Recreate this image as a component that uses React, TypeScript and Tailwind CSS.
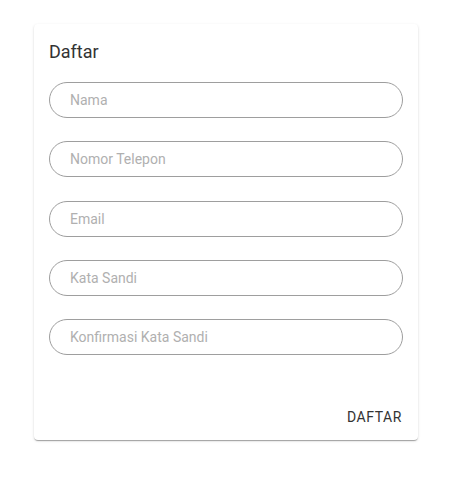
const fields = ['Nama', 'Nomor Telepon', 'Email', 'Kata Sandi', 'Konfirmasi Kata Sandi'];

export default function App() {
  return (
    <div className="min-h-[491px] w-[469px] bg-white pt-[24px] pl-[34px] font-['Roboto',sans-serif]">
      <div className="flex h-[416px] w-[384px] flex-col rounded-[4px] bg-white shadow-[0_2px_1px_-1px_rgba(0,0,0,0.2),0_1px_1px_0_rgba(0,0,0,0.14),0_1px_3px_0_rgba(0,0,0,0.12)]">
        {/* Form */}
        <div className="px-[15px] pt-[14px]">
          <h2 className="text-[18px] leading-[27px] text-[#333]">Daftar</h2>
          <div className="mt-[17px] flex flex-col gap-[23.3px]">
            {fields.map((f) => (
              <input
                key={f}
                type={f.startsWith('Kata') || f.startsWith('Konf') ? 'password' : 'text'}
                placeholder={f}
                className="h-[36px] w-[354px] rounded-full border border-[#9e9e9e] px-[20px] text-[14px] text-[#333] outline-none placeholder:text-[#b0b0b0]"
              />
            ))}
          </div>
        </div>

        {/* Actions */}
        <div className="mt-auto flex justify-end px-[8px] pt-[8px] pb-[5px]">
          <button className="h-[36px] px-[8px] text-[14px] uppercase tracking-[0.04em] text-[#333]">
            Daftar
          </button>
        </div>
      </div>
    </div>
  );
}
